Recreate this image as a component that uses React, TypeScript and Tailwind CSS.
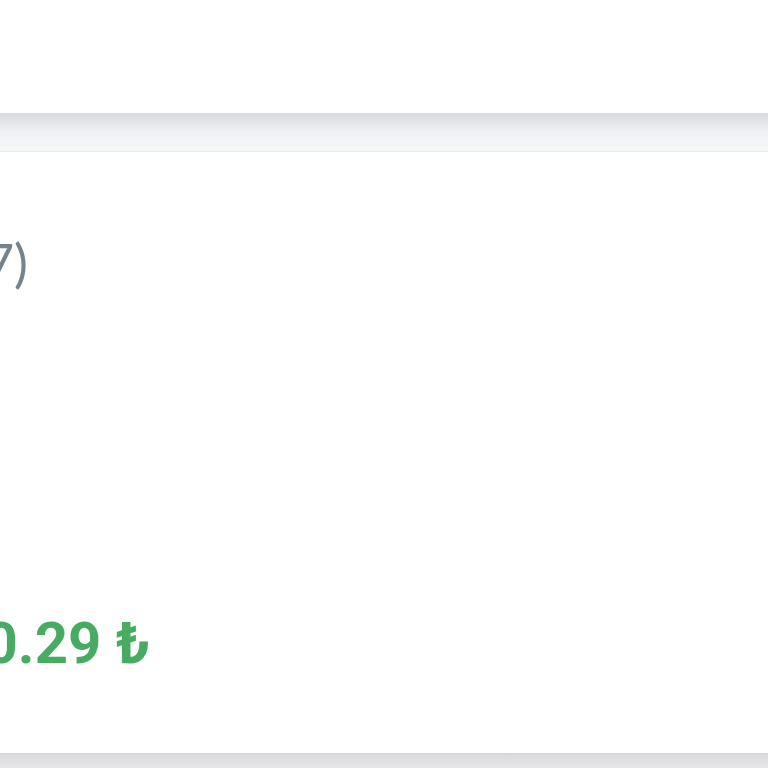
export default function App() {
  return (
    <div
      className="flex h-[768px] w-[768px] flex-col overflow-hidden bg-[#f4f5f7]"
      style={{ fontFamily: "Roboto, 'Liberation Sans', sans-serif" }}
    >
      <header className="h-[113px] shrink-0 bg-white" />

      <div className="h-[38px] shrink-0 bg-gradient-to-b from-[#d8d9dc] via-[#f0f1f4] to-[#f6f7f8]" />

      <section className="flex h-[602px] shrink-0 flex-col border-t border-[#e9eaec] bg-white">
        <div className="mt-[84px] flex w-[28px] justify-end">
          <h2 className="whitespace-nowrap font-['Lato',sans-serif] text-[52px] font-normal leading-none text-[#76838e]">
            Değerlendirmeler (7)
          </h2>
        </div>

        <div className="mt-auto mb-[81px] flex w-[150px] justify-end">
          <p className="whitespace-nowrap text-[58px] font-bold leading-none text-[#47ac62]">
            120.29 ₺
          </p>
        </div>
      </section>

      <div className="flex-1 border-t border-[#d2d2d5] bg-gradient-to-b from-[#dadade] to-[#e6e6e9]" />
    </div>
  );
}
